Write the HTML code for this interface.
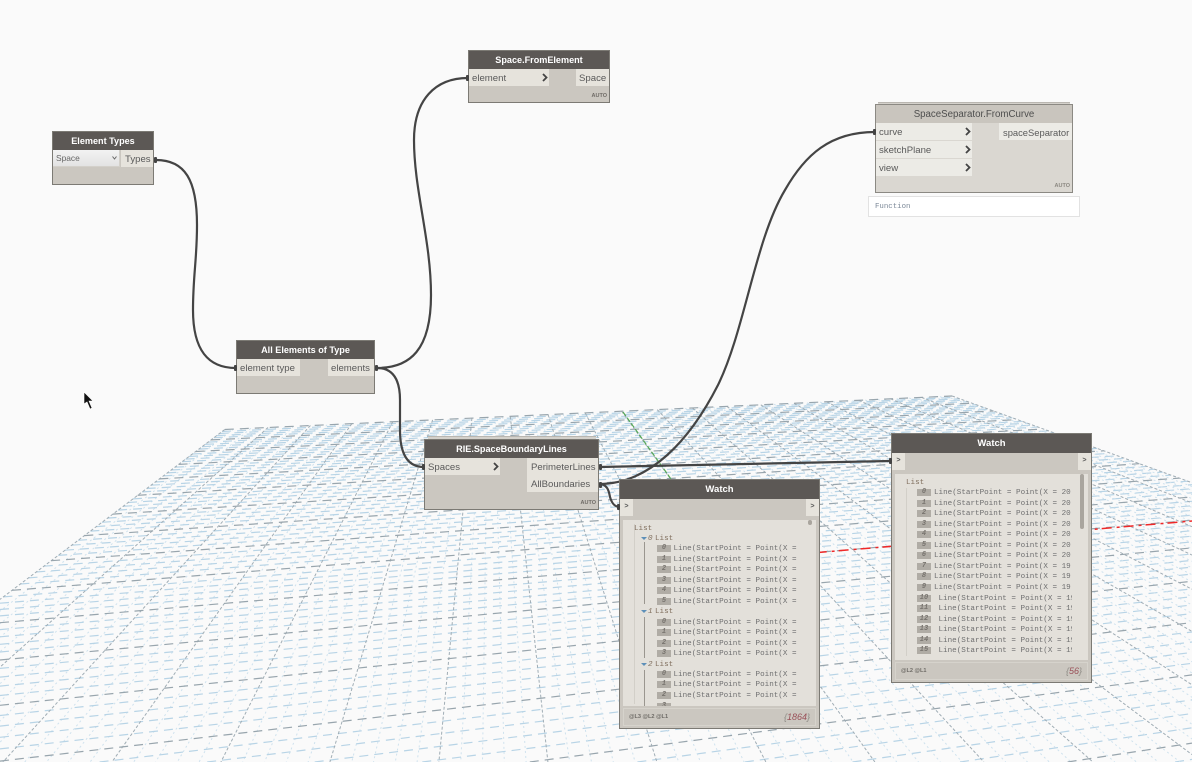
<!DOCTYPE html>
<html><head><meta charset="utf-8"><title>Dynamo graph</title>
<style>
html,body{margin:0;padding:0;background:#fafafa;overflow:hidden}
#c{position:relative;width:1192px;height:762px;overflow:hidden;background:#fafafa;font-family:"Liberation Sans",sans-serif}
svg.l{position:absolute;left:0;top:0}
.n{position:absolute;background:#cbc7c0;border:1px solid #7c7a74;box-sizing:border-box}
.h{position:absolute;left:0;right:0;top:0;height:18px;background:#5c5855;color:#fff;font:bold 9.1px/19px "Liberation Sans",sans-serif;text-align:center}
.p{position:absolute;background:#e6e3dc;color:#5a5a5a;font:9.6px/19px "Liberation Sans",sans-serif;height:17px;padding-left:3px;box-sizing:border-box;white-space:nowrap}
.p svg{position:absolute;right:1px;top:4px}
.a{position:absolute;font:bold 5.5px/6px "Liberation Sans",sans-serif;color:#6f6b66;margin-top:1px}
.w{width:201px;height:250px}
.wp{position:absolute;width:13px;height:17px;top:19px;background:#e6e3dc;font:bold 7px/17px "Liberation Mono",monospace;color:#555;text-align:center}
.pn{position:absolute;left:3px;width:193px;top:40px;height:186px;background:#e3e0da;overflow:hidden}
.ft{position:absolute;left:3px;width:193px;top:228px;height:18px;border:1px solid #d6d3cc;box-sizing:border-box}
.ft i{position:absolute;right:5px;top:1px;font:italic 9px/14px "Liberation Sans",sans-serif;color:#8d8a84}
.ft i u{text-decoration:none;color:#9a5058}
.ft b{position:absolute;left:5px;top:3px;font:bold 5.6px/10px "Liberation Sans",sans-serif;color:#6d6a65}
.r{position:absolute;left:0;height:12px;width:193px;font:7.6px/12px "Liberation Mono",monospace;color:#6f6f70;white-space:nowrap}
.r em{position:absolute;top:2px;height:7px;width:14px;background:#b0aca5;color:#77736e;font:italic bold 7px/7px "Liberation Mono",monospace;text-align:center}
.r s{position:absolute;text-decoration:none;top:0}
.t{color:#806f5e}
.tr{position:absolute;width:0;height:0;border-left:3px solid transparent;border-right:3px solid transparent;border-top:3px solid #5d8fb8}
.vl{position:absolute;width:1px;background:#9a968f}
</style></head>
<body><div id="c">
<svg class="l" id="grid" width="1192" height="762" xmlns="http://www.w3.org/2000/svg"></svg>

<svg class="l" width="1192" height="762" xmlns="http://www.w3.org/2000/svg" style="z-index:1">
<path d="M623,412L729,560" stroke="#55a855" stroke-width="1.2" stroke-dasharray="5 2" fill="none"/>
<path d="M729,560L1192,521" stroke="#f02828" stroke-width="1.5" stroke-dasharray="10 5 3 4" fill="none"/>
<g fill="none" stroke="#444" stroke-width="2.2">
<path d="M156,160C185,160 197,180 197,225C197,260 193,275 193,310C193,350 208,368 236,368"/>
<path d="M377,368C410,368 431,350 431,295C431,240 414,190 414,140C414,100 435,78 468,78"/>
<path d="M377,368C392,368 400,378 400,400L400,430C400,455 408,467 424,467"/>
<path d="M599,467L891,461"/>
<path d="M599,484C608,484 609,492 610,497C612,504 615,507 620,507"/>
<path d="M599,484C650,484 690,440 718,385C745,330 755,240 785,190C805,155 830,132 875,132"/>
</g>
<path d="M84,392L84,404L87,402L90,409L92,408L89,401L93,401Z" fill="#111" stroke="#fff" stroke-width=".6"/>
</svg>

<div style="position:relative;z-index:2">
<!-- Element Types -->
<div class="n" style="left:52px;top:131px;width:102px;height:54px">
 <div class="h">Element Types</div>
 <div style="position:absolute;left:0;top:18px;width:67px;height:17px;background:linear-gradient(#f3f3f3,#e3e3e3);border-right:1px solid #d3d0ca;border-bottom:1px solid #d3d0ca;box-sizing:border-box;font:8.4px/16px 'Liberation Sans',sans-serif;color:#666;padding-left:3px">Space
  <svg style="position:absolute;left:59px;top:6px" width="5" height="4"><path d="M.5,.5L2.5,3L4.5,.5" fill="none" stroke="#666"/></svg></div>
 <div class="p" style="left:68px;top:18px;width:32px;padding-left:4px">Types</div>
</div>
<!-- All Elements -->
<div class="n" style="left:236px;top:340px;width:139px;height:54px">
 <div class="h">All Elements of Type</div>
 <div class="p" style="left:0;top:18px;width:63px">element type</div>
 <div class="p" style="left:91px;top:18px;width:46px">elements</div>
</div>
<!-- Space.FromElement -->
<div class="n" style="left:468px;top:50px;width:142px;height:53px">
 <div class="h">Space.FromElement</div>
 <div class="p" style="left:0;top:18px;width:80px">element<svg width="6" height="9"><path d="M1,1L4.5,4.5L1,8" fill="none" stroke="#444" stroke-width="1.8"/></svg></div>
 <div class="p" style="left:107px;top:18px;width:33px">Space</div>
 <div class="a" style="right:2px;top:41px">AUTO</div>
</div>
<!-- SpaceSeparator -->
<div style="position:absolute;left:878px;top:102px;width:192px;height:2px;background:#d4d1cb;border-top:1px solid #b9b6b0;box-sizing:border-box"></div>
<div class="n" style="left:875px;top:104px;width:198px;height:89px;background:#dad7d1;border-color:#8b8983">
 <div class="h" style="background:#c9c5be;color:#4e4e4e;font-weight:normal;font-size:9.7px">SpaceSeparator.FromCurve</div>
 <div class="p" style="left:0;top:18px;width:96px;background:#ecebe6">curve<svg width="6" height="9"><path d="M1,1L4.5,4.5L1,8" fill="none" stroke="#444" stroke-width="1.8"/></svg></div>
 <div class="p" style="left:0;top:36px;width:96px;background:#ecebe6">sketchPlane<svg width="6" height="9"><path d="M1,1L4.5,4.5L1,8" fill="none" stroke="#444" stroke-width="1.8"/></svg></div>
 <div class="p" style="left:0;top:54px;width:96px;background:#ecebe6">view<svg width="6" height="9"><path d="M1,1L4.5,4.5L1,8" fill="none" stroke="#444" stroke-width="1.8"/></svg></div>
 <div class="p" style="left:123px;top:18px;width:73px;background:#ecebe6;padding-left:4px;font-size:9.4px">spaceSeparator</div>
 <div class="a" style="right:2px;top:77px;color:#8b8881">AUTO</div>
</div>
<div style="position:absolute;left:868px;top:196px;width:212px;height:21px;background:#fff;border:1px solid #e2e2e2;box-sizing:border-box;font:7.4px/20px 'Liberation Mono',monospace;color:#7d8a99;padding-left:6px">Function</div>
<!-- RIE -->
<div style="position:absolute;left:428px;top:436px;width:168px;height:3px;background:#d4d1cb;border-top:1px solid #b9b6b0;box-sizing:border-box"></div>
<div class="n" style="left:424px;top:439px;width:175px;height:71px">
 <div class="h">RIE.SpaceBoundaryLines</div>
 <div class="p" style="left:0;top:18px;width:75px">Spaces<svg width="6" height="9"><path d="M1,1L4.5,4.5L1,8" fill="none" stroke="#444" stroke-width="1.8"/></svg></div>
 <div class="p" style="left:102px;top:18px;width:71px;padding-left:4px">PerimeterLines</div>
 <div class="p" style="left:102px;top:35px;width:71px;padding-left:4px">AllBoundaries</div>
 <div class="a" style="right:2px;top:59px">AUTO</div>
</div>
<!-- Watch 1 -->
<div class="n w" style="left:619px;top:479px">
 <div class="h" style="height:19px;font-size:9.5px;line-height:19px">Watch</div>
 <div class="wp" style="left:0">&gt;</div><div class="wp" style="right:0">&gt;</div>
 <div class="pn">
  <div class="vl" style="left:11px;top:4px;height:180px;background:#d2cfc8"></div>
  <div style="position:absolute;left:185px;top:0;width:4px;height:5px;border-radius:2px;background:#a9a59e"></div>
  <div class="r t" style="top:3px"><s style="left:11px">List</s></div>
  <div class="tr" style="left:18px;top:17px"></div>
  <div class="r t" style="top:13px"><s style="left:25px;font-style:italic">0</s><s style="left:32px">List</s></div>
  <div class="vl" style="left:21px;top:22px;height:62px"></div>
  <div class="r" style="top:23px"><em style="left:34px">0</em><s style="left:50.5px">Line(StartPoint = Point(X =</s></div>
  <div class="r" style="top:34px"><em style="left:34px">1</em><s style="left:50.5px">Line(StartPoint = Point(X =</s></div>
  <div class="r" style="top:44px"><em style="left:34px">2</em><s style="left:50.5px">Line(StartPoint = Point(X =</s></div>
  <div class="r" style="top:55px"><em style="left:34px">3</em><s style="left:50.5px">Line(StartPoint = Point(X =</s></div>
  <div class="r" style="top:65px"><em style="left:34px">4</em><s style="left:50.5px">Line(StartPoint = Point(X =</s></div>
  <div class="r" style="top:76px"><em style="left:34px">5</em><s style="left:50.5px">Line(StartPoint = Point(X =</s></div>
  <div class="tr" style="left:18px;top:90px"></div>
  <div class="r t" style="top:86px"><s style="left:25px;font-style:italic">1</s><s style="left:32px">List</s></div>
  <div class="vl" style="left:21px;top:97px;height:41px"></div>
  <div class="r" style="top:97px"><em style="left:34px">0</em><s style="left:50.5px">Line(StartPoint = Point(X =</s></div>
  <div class="r" style="top:107px"><em style="left:34px">1</em><s style="left:50.5px">Line(StartPoint = Point(X =</s></div>
  <div class="r" style="top:118px"><em style="left:34px">2</em><s style="left:50.5px">Line(StartPoint = Point(X =</s></div>
  <div class="r" style="top:128px"><em style="left:34px">3</em><s style="left:50.5px">Line(StartPoint = Point(X =</s></div>
  <div class="tr" style="left:18px;top:143px"></div>
  <div class="r t" style="top:139px"><s style="left:25px;font-style:italic">2</s><s style="left:32px">List</s></div>
  <div class="vl" style="left:21px;top:150px;height:36px"></div>
  <div class="r" style="top:149px"><em style="left:34px">0</em><s style="left:50.5px">Line(StartPoint = Point(X =</s></div>
  <div class="r" style="top:159px"><em style="left:34px">1</em><s style="left:50.5px">Line(StartPoint = Point(X =</s></div>
  <div class="r" style="top:170px"><em style="left:34px">2</em><s style="left:50.5px">Line(StartPoint = Point(X =</s></div>
  <div class="r" style="top:181px;height:5px;overflow:hidden"><em style="left:34px">3</em></div>
 </div>
 <div class="ft"><b>@L3 @L2 @L1</b><i>{<u>1864</u>}</i></div>
</div>
<!-- Watch 2 -->
<div class="n w" style="left:891px;top:433px">
 <div class="h" style="height:19px;font-size:9.5px;line-height:19px">Watch</div>
 <div class="wp" style="left:0">&gt;</div><div class="wp" style="right:0">&gt;</div>
 <div class="pn">
  <div style="position:absolute;left:11px;top:14px;width:1px;height:168px;background:#d2cfc8"></div>
  <div style="position:absolute;left:185px;top:0;width:4px;height:55px;border-radius:2px;background:#a9a59e"></div>
  <div style="position:absolute;left:0;top:0;width:177px;height:186px;overflow:hidden">
  <div class="r t" style="top:3px"><s style="left:11px">List</s></div>
  <div class="r" style="top:13px"><em style="left:22px">0</em><s style="left:39px">Line(StartPoint = Point(X = 20</s></div>
  <div class="r" style="top:24px"><em style="left:22px">1</em><s style="left:39px">Line(StartPoint = Point(X = 20</s></div>
  <div class="r" style="top:34px"><em style="left:22px">2</em><s style="left:39px">Line(StartPoint = Point(X = 20</s></div>
  <div class="r" style="top:45px"><em style="left:22px">3</em><s style="left:39px">Line(StartPoint = Point(X = 20</s></div>
  <div class="r" style="top:55px"><em style="left:22px">4</em><s style="left:39px">Line(StartPoint = Point(X = 20</s></div>
  <div class="r" style="top:66px"><em style="left:22px">5</em><s style="left:39px">Line(StartPoint = Point(X = 20</s></div>
  <div class="r" style="top:76px"><em style="left:22px">6</em><s style="left:39px">Line(StartPoint = Point(X = 20</s></div>
  <div class="r" style="top:87px"><em style="left:22px">7</em><s style="left:39px">Line(StartPoint = Point(X = 19</s></div>
  <div class="r" style="top:97px"><em style="left:22px">8</em><s style="left:39px">Line(StartPoint = Point(X = 19</s></div>
  <div class="r" style="top:108px"><em style="left:22px">9</em><s style="left:39px">Line(StartPoint = Point(X = 19</s></div>
  <div class="r" style="top:119px"><em style="left:22px">10</em><s style="left:43.5px">Line(StartPoint = Point(X = 19</s></div>
  <div class="r" style="top:129px"><em style="left:22px">11</em><s style="left:43.5px">Line(StartPoint = Point(X = 19</s></div>
  <div class="r" style="top:140px"><em style="left:22px">12</em><s style="left:43.5px">Line(StartPoint = Point(X = 19</s></div>
  <div class="r" style="top:150px"><em style="left:22px">13</em><s style="left:43.5px">Line(StartPoint = Point(X = 19</s></div>
  <div class="r" style="top:161px"><em style="left:22px">14</em><s style="left:43.5px">Line(StartPoint = Point(X = 19</s></div>
  <div class="r" style="top:171px"><em style="left:22px">15</em><s style="left:43.5px">Line(StartPoint = Point(X = 19</s></div>
  </div>
 </div>
 <div class="ft"><b>@L2 @L1</b><i>{<u>56</u>}</i></div>
</div>
</div>

<svg class="l" width="1192" height="762" xmlns="http://www.w3.org/2000/svg" style="z-index:3;pointer-events:none">
<g fill="#444">
<rect x="154" y="157" width="3" height="6" rx="1"/>
<rect x="234" y="365" width="3" height="6" rx="1"/>
<rect x="375" y="365" width="3" height="6" rx="1"/>
<rect x="466" y="75" width="3" height="6" rx="1"/>
<rect x="422" y="464" width="3" height="6" rx="1"/>
<rect x="599" y="464" width="3" height="6" rx="1"/>
<rect x="599" y="482" width="3" height="6" rx="1"/>
<rect x="617" y="504" width="3" height="6" rx="1"/>
<rect x="889" y="458" width="3" height="6" rx="1"/>
<rect x="873" y="129" width="3" height="6" rx="1"/>
</g>
</svg>
</div>
<script>
(function(){
var svg=document.getElementById('grid'),NS='http://www.w3.org/2000/svg';
var A=[4580,229],B=[490,229],O=[729,560],s=.1655,t=.8165,MINW=.45,W=1192,H=762;
function P(u,v){var w=1+u+v;return [(u*A[0]+v*B[0]+O[0])/w,(u*A[1]+v*B[1]+O[1])/w];}
function clip(p,q){var t0=0,t1=1,dx=q[0]-p[0],dy=q[1]-p[1];
 var c=[[-dx,p[0]],[dx,W-p[0]],[-dy,p[1]],[dy,H-p[1]]];
 for(var i=0;i<4;i++){var a=c[i][0],b=c[i][1];
  if(a===0){if(b<0)return null;continue;}
  var r=b/a;
  if(a<0){if(r>t1)return null;if(r>t0)t0=r;}else{if(r<t0)return null;if(r<t1)t1=r;}}
 return [[p[0]+t0*dx,p[1]+t0*dy],[p[0]+t1*dx,p[1]+t1*dy]];}
function L(p,q,c,d,sw){var k=clip(p,q);if(!k)return;var e=document.createElementNS(NS,'line');
e.setAttribute('x1',k[0][0].toFixed(1));e.setAttribute('y1',k[0][1].toFixed(1));
e.setAttribute('x2',k[1][0].toFixed(1));e.setAttribute('y2',k[1][1].toFixed(1));
e.setAttribute('stroke',c);e.setAttribute('stroke-dasharray',d);e.setAttribute('stroke-width',sw);
svg.appendChild(e);}
function draw(major){
for(var i=-50;i<=50;i++){
 if((i%5===0)!==major)continue;
 var u=i*s/50,vmin=Math.max(-t,MINW-1-u);
 L(P(u,t),P(u,vmin),major?'#a0adb5':'#cfe2ee',major?'3 2':'2 3',1);
 var v=i*t/50,umin=Math.max(-s,MINW-1-v);
 if(umin<s)L(P(umin,v),P(s,v),major?'#98a5ad':'#b8d4e6',major?'9 6':'9 6',1.2);
}}
draw(false);draw(true);
})();
</script>
</body></html>
